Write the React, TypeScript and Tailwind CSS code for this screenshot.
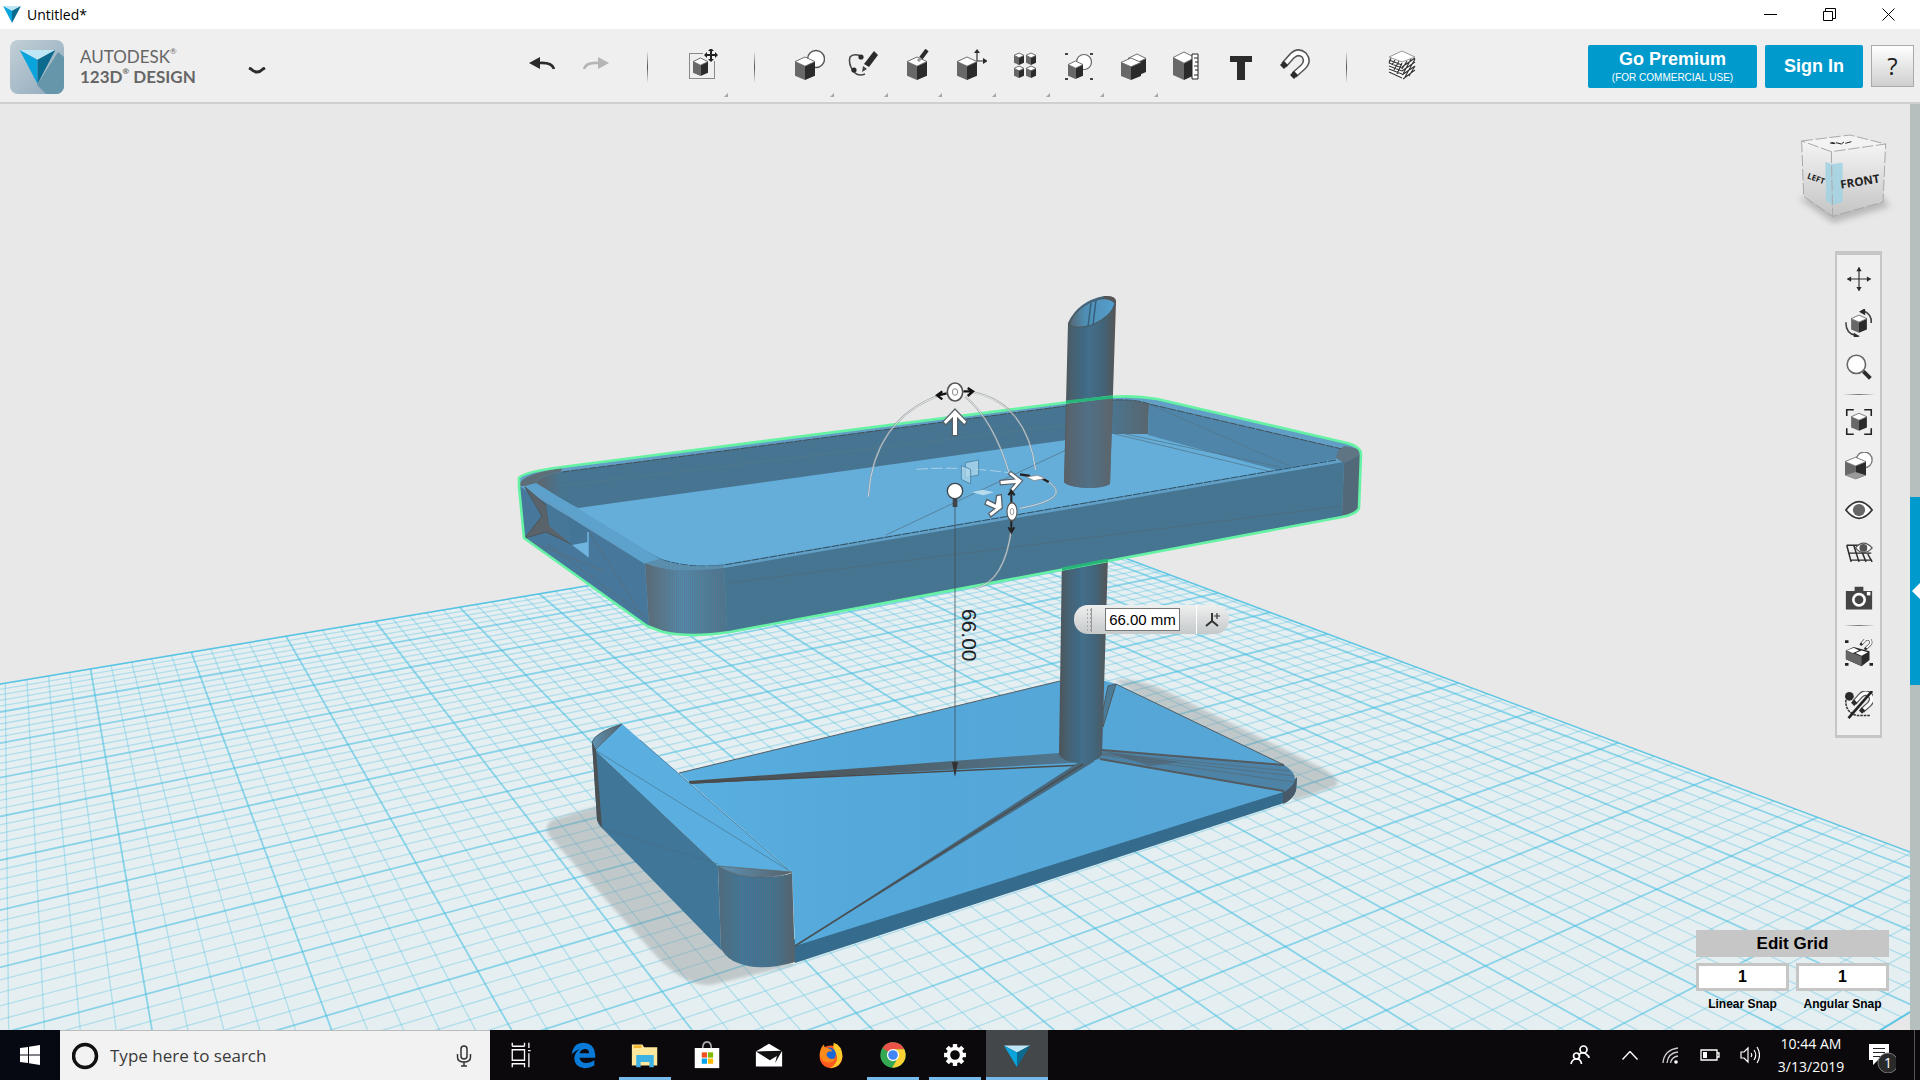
import React from "react";

type Kids = { children: React.ReactNode };

function Cube({ x, y, w, h, glass = false }: { x: number; y: number; w: number; h: number; glass?: boolean }) {
  const m = x + w / 2;
  const a = y + h * 0.2;
  const b = y + h * 0.4;
  const c = y + h * 0.82;
  return (
    <g strokeLinejoin="round">
      <path d={`M${x} ${a}L${m} ${b}V${y + h}L${x} ${c}Z`} fill="#686868" />
      <path d={`M${x + w} ${a}L${m} ${b}V${y + h}L${x + w} ${c}Z`} fill="#2b2b2b" />
      <path d={`M${m} ${y}L${x + w} ${a}L${m} ${b}L${x} ${a}Z`} fill="#fff" stroke="#606060" strokeWidth=".9" />
      {glass && <path d={`M${m} ${c - h * 0.15}L${x + w} ${c}L${m} ${y + h}L${x} ${c}Z`} fill="#999" />}
    </g>
  );
}

function Icon({ children, className = "h-8 w-8" }: Kids & { className?: string }) {
  return (
    <svg viewBox="0 0 32 32" className={className} fill="none" aria-hidden="true">
      {children}
    </svg>
  );
}

function Magnet({ t }: { t?: string }) {
  return (
    <g transform={t}>
      <path d="M5 16 13 7q6-6 12-1 5 6-1 12l-9 8" stroke="#555" strokeWidth="7" />
      <path d="M5 16 13 7q6-6 12-1 5 6-1 12l-9 8" stroke="#fff" strokeWidth="4" />
      <path d="m1 16 4-4 4 4-4 4zM11 26l4-4 4 4-4 4z" fill="#2b2b2b" />
    </g>
  );
}

function Pyramid({ className }: { className: string }) {
  return (
    <svg viewBox="0 0 44 42" className={className} aria-hidden="true">
      <path d="M0 0H44L22 12Z" fill="#bfe6f5" />
      <path d="M0 0 22 12V42Z" fill="#0aa4dc" />
      <path d="M44 0 22 12V42Z" fill="#0b6a8d" />
    </svg>
  );
}

const tools: { name: string; menu: boolean; art: React.ReactNode }[] = [
  {
    name: "Primitives",
    menu: true,
    art: (
      <>
        <circle cx="23" cy="10" r="8.5" fill="#fff" stroke="#555" strokeWidth="1.4" />
        <Cube x={2} y={8} w={20} h={23} />
      </>
    ),
  },
  {
    name: "Sketch",
    menu: true,
    art: (
      <>
        <path d="M14 7Q6 4 3 8q-2 6 3 14 5 6 12 3" stroke="#444" strokeWidth="1.5" />
        <circle cx="14" cy="8" r="2.6" fill="#2b2b2b" />
        <circle cx="7" cy="21" r="2.6" fill="#2b2b2b" />
        <path d="m27 2 4 4-9 12-5-3z" fill="#2b2b2b" />
        <path d="m16 17 4 3-5 3z" fill="#444" />
      </>
    ),
  },
  {
    name: "Construct",
    menu: true,
    art: (
      <>
        <Cube x={6} y={8} w={20} h={23} />
        <path d="m17 12 3-3" stroke="#999" strokeWidth="3" />
        <path d="m20 9 6-8" stroke="#2b2b2b" strokeWidth="4" />
      </>
    ),
  },
  {
    name: "Modify",
    menu: true,
    art: (
      <>
        <Cube x={2} y={8} w={20} h={23} />
        <path d="M22 12V2M22 12H31" stroke="#333" strokeWidth="1.2" />
        <path d="m19 4 3-4 3 4zM28 9l5 3-5 3z" fill="#2b2b2b" />
      </>
    ),
  },
  {
    name: "Pattern",
    menu: true,
    art: (
      <>
        <Cube x={5} y={4} w={10} h={12} />
        <Cube x={17} y={4} w={10} h={12} />
        <Cube x={5} y={17} w={10} h={12} />
        <Cube x={17} y={17} w={10} h={12} />
      </>
    ),
  },
  {
    name: "Grouping",
    menu: true,
    art: (
      <>
        <circle cx="21" cy="13" r="7.5" fill="#fff" stroke="#666" strokeWidth="1.2" />
        <Cube x={5} y={12} w={15} h={18} />
        <path d="M2 5H5M27 5h3M2 30h3M27 30h3" stroke="#444" strokeWidth="2" />
      </>
    ),
  },
  {
    name: "Combine",
    menu: true,
    art: (
      <>
        <Cube x={11} y={5} w={18} h={22} />
        <Cube x={4} y={9} w={20} h={22} />
      </>
    ),
  },
  {
    name: "Measure",
    menu: false,
    art: (
      <>
        <Cube x={2} y={3} w={22} h={28} />
        <path d="M21 5h6v25h-6z" fill="#fff" stroke="#222" />
        <path d="M23 9h4M24 13h3M23 17h4M24 21h3M23 26h4" stroke="#222" />
      </>
    ),
  },
  { name: "Text", menu: false, art: <path d="M5 7h22v6h-7v18h-8V13H5z" fill="#2b2b2b" /> },
  { name: "Snap", menu: false, art: <Magnet /> },
];

function ToolButton({ name, menu, children }: Kids & { name: string; menu?: boolean }) {
  return (
    <button aria-label={name} className="relative flex h-16 w-[54px] shrink-0 items-center justify-center pb-1">
      <Icon>{children}</Icon>
      {menu && (
        <svg viewBox="0 0 4 4" className="absolute right-0.5 bottom-0.5 h-1 w-1">
          <path d="M4 0V4H0Z" fill="#a5a5a5" />
        </svg>
      )}
    </button>
  );
}

function Divider() {
  return <span className="h-8 w-px shrink-0 bg-gradient-to-b from-transparent via-neutral-600 to-transparent" />;
}

function TitleBar() {
  return (
    <div className="flex h-[29px] items-center bg-white pr-0.5 text-black">
      <Pyramid className="ml-0.5 h-[17px] w-5" />
      <span className="ml-[5px] font-['Open_Sans',sans-serif] text-[14px]">Untitled*</span>
      <div className="ml-auto flex">
        <button aria-label="Minimize" className="flex w-[59px] justify-center">
          <svg viewBox="0 0 13 13" className="h-[13px] w-[13px]" stroke="#000" fill="none"><path d="M0 6.500H13" /></svg>
        </button>
        <button aria-label="Restore" className="flex w-[59px] justify-center">
          <svg viewBox="0 0 13 13" className="h-[13px] w-[13px]" stroke="#000" fill="none"><path d="M.5 3.500h9v9h-9zM2.500 3V.5h10v10H10" /></svg>
        </button>
        <button aria-label="Close" className="flex w-[59px] justify-center">
          <svg viewBox="0 0 13 13" className="h-[13px] w-[13px]" stroke="#000" fill="none"><path d="m.5.5 12 12m0-12-12 12" /></svg>
        </button>
      </div>
    </div>
  );
}

function Toolbar() {
  return (
    <div className="flex h-[75px] items-center border-b-2 border-[#cfcfcf] bg-[#efefef] pt-0.5 pr-1.5">
      <div className="flex w-[515px] shrink-0 items-center pl-2.5">
        <div className="relative flex h-[54px] w-[54px] shrink-0 items-center justify-center overflow-hidden rounded-lg bg-gradient-to-br from-[#c3d0d6] to-[#8fa9bd]">
          <svg viewBox="0 0 54 54" className="absolute inset-0" aria-hidden="true">
            <path d="M48 12 54 17V54H36L27 45Z" fill="#6696a9" />
          </svg>
          <Pyramid className="relative h-[34px] w-[43px]" />
        </div>
        <div className="ml-4 w-[120px] font-[Lato,sans-serif] text-[17px] leading-5 whitespace-nowrap text-[#666]">
          <div>AUTODESK<span className="align-top text-[8px] leading-none">®</span></div>
          <div className="font-bold">123D<span className="align-top text-[8px] leading-none">®</span> DESIGN</div>
        </div>
        <button aria-label="Application menu" className="mt-2 ml-12">
          <svg viewBox="0 0 18 8" className="h-2 w-[18px]" fill="none" stroke="#2b2b2b" strokeWidth="3"><path d="m1 1 2 1q6 6 12 0l2-1" /></svg>
        </button>
      </div>
      <button aria-label="Undo" className="flex w-[54px] shrink-0 justify-center pb-1.5">
        <svg viewBox="0 0 26 13" className="h-[13px] w-[26px]" fill="none"><path d="M0 6 11 0V12Z" fill="#2b2b2b" /><path d="M10 6q13-1 15 6" stroke="#2b2b2b" strokeWidth="2.600" /></svg>
      </button>
      <button aria-label="Redo" className="flex w-[54px] shrink-0 justify-center pb-1.5">
        <svg viewBox="0 0 26 13" className="h-[13px] w-[26px]" fill="none"><path d="M26 6 15 0V12Z" fill="#b5b5b5" /><path d="M16 6Q3 5 1 12" stroke="#b5b5b5" strokeWidth="2.600" /></svg>
      </button>
      <div className="flex items-center pl-6">
        <Divider />
        <div className="pr-6 pl-7">
          <ToolButton name="Transform" menu>
            <path d="M2.500 4.500h25v25h-25z" stroke="#222" strokeDasharray="1 1" />
            <path d="M16 0h16v12H16z" fill="#efefef" />
            <Cube x={6} y={9} w={15} h={18} />
            <path d="M24 1v10M19 6h10" stroke="#222" strokeWidth="2" />
            <path d="m21 2 3-3 3 3zM21 10l3 3 3-3zM20 3l-3 3 3 3zM28 3l3 3-3 3z" fill="#222" />
          </ToolButton>
        </div>
        <Divider />
      </div>
      <div className="flex items-center pr-6 pl-[27px]">
        {tools.map((t) => (
          <ToolButton key={t.name} name={t.name} menu={t.menu}>{t.art}</ToolButton>
        ))}
      </div>
      <Divider />
      <div className="pl-7">
        <ToolButton name="Material">
          <path d="M3 8 16 13V30L3 24ZM29 8 16 13V30L29 24Z" fill="#fff" />
          <path d="M3 11l13 5M3 14l13 5M3 17l13 5M3 20l13 5M3 23l13 6M29 9 16 18M29 13 16 22M29 17 16 26M29 21l-12 9M5 9l-2 5M9 11l-3 5M13 12l-5 9M16 14 11 25M21 12l-5 8M25 10l-8 15M29 10 19 28M29 17l-6 10" stroke="#333" strokeWidth="1.100" />
          <path d="M16 2 29 8 16 13 3 8Z" fill="#fff" stroke="#999" />
        </ToolButton>
      </div>
      <div className="ml-auto flex shrink-0 gap-2 font-['Liberation_Sans',Arial,sans-serif] text-white">
        <button className="h-[43px] w-[169px] rounded-xs bg-[#009acd]">
          <span className="block text-[18px] leading-[22px] font-bold">Go Premium</span>
          <span className="block text-[10px] leading-4">(FOR COMMERCIAL USE)</span>
        </button>
        <button className="h-[43px] w-[98px] rounded-xs bg-[#009acd] text-[18px] font-bold">Sign In</button>
        <button className="h-[42px] w-[43px] border border-[#aaa] bg-gradient-to-b from-white to-[#cfcfcf] font-['Open_Sans',sans-serif] text-[24px] text-[#222]">?</button>
      </div>
    </div>
  );
}

/* Ground plane: every line of a family runs to its own vanishing point. */
const vpA = { x: 3380, y: 118 };
const vpB = { x: 0, y: 137 };

const alongRight = Array.from({ length: 76 }, (_, i) => {
  const x = 1 / (0.0009903 - (i * 0.00003386) / 5);
  const y = 137 + 0.3742 * x;
  const k = 3;
  return { major: i % 5 === 0, x1: x, y1: y, x2: x + (x - vpA.x) * k, y2: y + (y - vpA.y) * k };
});

const alongBack = Array.from({ length: 110 }, (_, i) => {
  const x = vpA.x - 1 / (0.0004192 - (i - 1) * 0.00000192);
  const y = 684 - 0.1675 * x;
  const k = 6;
  return { major: i % 5 === 1, x1: x, y1: y, x2: x + (x - vpB.x) * k, y2: y + (y - vpB.y) * k };
});

function Ground() {
  return (
    <g>
      <clipPath id="plane"><path d="M1010 515 2073 913 1740 1116H-400V751Z" /></clipPath>
      <path d="M1010 515 2073 913 1740 1116H-400V751Z" fill="#e5eef0" />
      <g clipPath="url(#plane)" stroke="#3fbde2">
        {[...alongRight, ...alongBack].map((l, i) => (
          <line key={i} x1={l.x1} y1={l.y1} x2={l.x2} y2={l.y2} strokeWidth={l.major ? 1.8 : 1.3} opacity={l.major ? 0.55 : 0.32} />
        ))}
      </g>
      <path d="M-400 751 1010 515 2073 913 1740 1116" fill="none" stroke="#3fbde2" strokeWidth="1.500" opacity=".8" />
    </g>
  );
}

function Defs() {
  return (
    <defs>
      <linearGradient id="pole">
        <stop offset="0" stopColor="#4d5356" /><stop offset=".15" stopColor="#48606f" /><stop offset=".42" stopColor="#3f6a86" />
        <stop offset=".46" stopColor="#446f8b" /><stop offset=".75" stopColor="#426479" /><stop offset="1" stopColor="#555" />
      </linearGradient>
      <linearGradient id="poleIn">
        <stop offset="0" stopColor="#5e656b" /><stop offset=".5" stopColor="#567085" /><stop offset="1" stopColor="#62686c" />
      </linearGradient>
      <linearGradient id="plate"><stop offset="0" stopColor="#5aafe1" /><stop offset=".3" stopColor="#54a8da" /><stop offset="1" stopColor="#56a6d6" /></linearGradient>
      <linearGradient id="beam"><stop offset="0" stopColor="#4a4a4a" /><stop offset=".5" stopColor="#4f5f69" /><stop offset="1" stopColor="#507a94" /></linearGradient>
      <linearGradient id="corner"><stop offset="0" stopColor="#4c6c80" /><stop offset=".3" stopColor="#40779b" /><stop offset=".75" stopColor="#41718f" /><stop offset="1" stopColor="#53626b" /></linearGradient>
      <linearGradient id="trayCorner"><stop offset="0" stopColor="#586b78" /><stop offset=".45" stopColor="#5189ac" /><stop offset="1" stopColor="#4a7590" /></linearGradient>
      <linearGradient id="cap"><stop offset="0" stopColor="#5d93b5" /><stop offset="1" stopColor="#57626a" /></linearGradient>
      <linearGradient id="darkEnd"><stop offset="0" stopColor="#4a7692" /><stop offset="1" stopColor="#59656d" /></linearGradient>
      <linearGradient id="innerEnd"><stop offset="0" stopColor="#5f666b" /><stop offset="1" stopColor="#477591" /></linearGradient>
      <linearGradient id="bore"><stop offset="0" stopColor="#55666f" /><stop offset=".35" stopColor="#4f8eb4" /><stop offset="1" stopColor="#559fcd" /></linearGradient>
      <pattern id="ribs" width="2" height="8" patternUnits="userSpaceOnUse"><path d="M.5 0V8" stroke="#6b6560" strokeWidth=".7" opacity=".32" /></pattern>
      <filter id="soft"><feGaussianBlur stdDeviation="1.500" /></filter>
    </defs>
  );
}

function Base() {
  return (
    <g>
      <g fill="#8b9294" opacity=".4" filter="url(#soft)">
        <path d="M597 806 552 820Q542 828 551 838L658 958Q690 990 715 984L795 965Z" />
        <path d="M1115 680Q1140 678 1168 692L1322 768Q1345 782 1334 787L1296 800Z" />
      </g>
      <path d="M792 940 1283 792 1297 778 1296 791Q1293 800 1281 804L795 963Z" fill="#356b8c" />
      <path d="M1283 792 1297 777 1296 790Q1293 800 1283 804Z" fill="#48596a" />
      <path d="M679 773 1060 681H1105L1116 684 1284 765Q1305 779 1283 792L795 946 792 872Z" fill="url(#plate)" />
      <path d="M679 773 1060 681M1116 684 1284 765" stroke="#505d64" fill="none" />
      <path d="M689 781 1059 753 1089 762 689 784Z" fill="url(#beam)" />
      <path d="m689 783 395-18" stroke="#4b4b4b" strokeWidth="1.500" />
      <path d="M795 946 1079 762 1095 761Z" fill="#49687c" />
      <path d="M795 946 1083 764" stroke="#4a4f52" strokeWidth="1.500" />
      <path d="M1102 750 1284 765Q1306 779 1284 792L1098 759Z" fill="#4d83a7" />
      <path d="M1102 750 1284 765M1100 759 1284 791" stroke="#535b60" strokeWidth="2" />
      <path d="M1102 753 1290 771M1102 754 1294 776M1102 755 1294 782" stroke="#5a6468" strokeWidth=".6" />
      <path d="M1102 751 1180 762 1150 766Z" fill="#505961" opacity=".5" />
      <path d="M1116 684 1103 727V710L1108 686Z" fill="#4c7b97" stroke="#515a60" />
      <path d="M1062 555h46L1102 755Q1096 763 1080 763 1062 762 1059 754Z" fill="url(#pole)" />
      <path d="M592 742Q594 733 622 724L792 872 718 866 595 750Z" fill="#5aafe0" />
      <path d="M592 742Q596 732 622 724L595 750Z" fill="url(#cap)" stroke="#505b61" strokeWidth=".8" />
      <path d="M592 742 595 750 718 866 721 950 602 828Q597 824 597 818Z" fill="#407799" />
      <path d="m592 742 5 78 5 8-6-78z" fill="#4b5052" />
      <path d="M595 750 788 870M640 740 790 871M602 828 718 864" stroke="#486a7e" strokeWidth=".8" opacity=".7" />
      <path d="M718 866Q738 878 760 877 782 877 792 873L795 962Q760 972 738 963 728 960 721 949Z" fill="url(#corner)" />
      <path d="M718 866Q738 878 760 877 782 877 792 873L795 962Q760 972 738 963 728 960 721 949Z" fill="url(#ribs)" />
      <path d="M718 866 792 872Q780 877 760 877 738 878 718 866Z" fill="url(#cap)" stroke="#56636a" strokeWidth=".8" />
    </g>
  );
}

function Tray() {
  return (
    <g>
      <path d="M519 487V478Q523 472 562 467L1109 397Q1135 395 1157 399L1347 443Q1361 447 1361 454L1359 508Q1357 514 1342 517L730 632Q690 638 663 632L647 626 524 538Z" fill="#619fc6" />
      <path d="M536 483Q540 475 562 472L1112 400Q1136 399 1149 404L1342 449 1336 460 724 564Q690 569 660 559Z" fill="#66aeda" />
      <path d="M536 483Q540 475 562 472L1112 400 1110 434 578 508 548 492Z" fill="#477591" />
      <path d="M536 483Q540 475 562 472V500L546 490Z" fill="url(#innerEnd)" />
      <path d="M1112 400Q1130 399 1149 404L1148 434 1110 434Z" fill="url(#darkEnd)" />
      <path d="M1149 404 1342 449 1336 459 1276 470 1148 435Z" fill="#4f85a9" />
      <path d="M1149 404 1290 466M560 486 1108 420M886 535 1066 450M1115 434 1268 471M1125 434 1280 467" stroke="#53778b" strokeWidth=".8" />
      <path d="M562 472 1112 400Q1136 399 1149 404L1342 449" fill="none" stroke="#444f56" strokeDasharray="8 1" />
      <path d="M1336 460 724 565Q690 569 660 559L630 543" fill="none" stroke="#2e4f63" strokeDasharray="8 1" />
      <path d="M724 568 1344 462 1342 516 727 632Z" fill="#467591" />
      <path d="M728 583 1342 506" stroke="#50697a" strokeWidth=".8" />
      <path d="M1336 458 1338 451 1344 446Q1361 448 1361 454L1344 463Z" fill="#5f7583" />
      <path d="M1344 463 1361 454 1359 508Q1356 514 1342 516Z" fill="#52697a" />
      <path d="M519 486 645 564 649 626 524 537Z" fill="#47779a" />
      <path d="M525 485 536 483 660 559 645 564Z" fill="#5ca2cd" />
      <path d="M519 486Q520 474 562 468L561 472Q539 475 536 483L525 486Z" fill="#5e6e78" />
      <path d="M525 487 546 505 549 525 573 545 546 532 525 538 542 516Z" fill="#5b636a" stroke="#4b555a" strokeWidth="1" />
      <path d="M546 505 568 516 572 545 549 526Z" fill="#467799" />
      <path d="M568 516 589 530V557L572 545Z" fill="#437596" />
      <path d="M572 545 588 542V557Z" fill="#6fb5e0" />
      <path d="M588 532V557" stroke="#6fb5e0" strokeWidth="1.500" />
      <path d="M589 532 640 612M526 540 604 571M546 543 646 618" stroke="#5b6c76" strokeWidth=".7" />
      <path d="M645 563Q665 571 690 570L724 567 727 632Q690 638 663 632L649 625Z" fill="url(#trayCorner)" />
      <path d="M645 563Q665 571 690 570L724 567 727 632Q690 638 663 632L649 625Z" fill="url(#ribs)" />
      <path d="M645 563 660 559Q685 569 724 565V568Q670 574 645 563Z" fill="#5b8ead" />
      <path d="M1068 323Q1078 301 1104 296 1116 295 1116 302L1110 484Q1104 488 1088 488 1068 487 1064 482Z" fill="url(#pole)" />
      <path d="M1067 400 1113 396 1110 484Q1104 488 1088 488 1068 487 1064 482Z" fill="url(#poleIn)" opacity=".75" />
      <path d="M1069 324Q1078 304 1100 299 1114 297 1115 303 1112 316 1092 325 1073 330 1069 324Z" fill="url(#bore)" stroke="#4c565c" />
      <path d="M1091 303 1088 327M1096 300 1093 325" stroke="#36607a" strokeWidth="1.500" />
      <path d="M1104 296Q1116 295 1116 302V306Q1114 300 1104 299Z" fill="#555" />
      <path d="M519 487V478Q523 472 562 467L1109 397Q1135 395 1157 399L1347 443Q1361 447 1361 454L1359 508Q1357 514 1342 517L730 632Q690 638 663 632L647 626 524 538Z" fill="none" stroke="#66f2a4" strokeWidth="2.600" strokeLinejoin="round" />
      <path d="M1066 402 1113 397M1062 569 1108 560" stroke="#27b57a" strokeWidth="3" />
    </g>
  );
}

function Dial() {
  return (
    <>
      <ellipse rx="23" ry="27" fill="#fff" stroke="#555" strokeWidth="5" />
      <ellipse rx="8" ry="10" fill="#fff" stroke="#888" strokeWidth="3" />
    </>
  );
}

function Arc({ d }: { d: string }) {
  return (
    <>
      <path d={d} stroke="#8d9396" strokeWidth="6" fill="none" />
      <path d={d} stroke="#e9edef" strokeWidth="3" fill="none" />
    </>
  );
}

/* Handles are drawn on a grid three times finer than the canvas. */
function Gizmo() {
  const arrow = "M-8 40V-12L-28 8-36-2 0-40 36-2 28 8 8-12V40Z";
  return (
    <g>
      <path d="M955 498V775" stroke="#3e4a52" strokeOpacity=".75" />
      <path d="m952 762 3 15 3-15z" fill="#333" />
      <g transform="translate(840 360) scale(.33333)">
        <g opacity=".7">
          <Arc d="M85 410Q100 180 300 105" />
          <Arc d="M400 97Q560 130 587 330" />
          <Arc d="M376 110Q460 180 508 340" />
          <Arc d="M515 500Q495 670 400 686" />
          <Arc d="M625 365Q700 415 540 445" />
        </g>
        <path d="M230 328Q360 318 505 338" stroke="#a9cfe4" strokeWidth="3" strokeDasharray="34 10" fill="none" />
        <path d="M376 308 416 300V345L376 353Z" fill="#b4d9ea" fillOpacity=".7" stroke="#4d8caf" strokeWidth="3" />
        <path d="M364 316 392 328V372L364 358Z" fill="#b4d9ea" fillOpacity=".7" stroke="#4d8caf" strokeWidth="3" />
        <path d="m396 397 32-8 34 8-32 9z" fill="#b8dcee" />
        <g transform="translate(345 96)">
          <path d="M-50 10-25 4M25-2 50-2M-38-2-54 10-38 22M38-12 54-2 38 12" stroke="#111" strokeWidth="7" fill="none" />
          <Dial />
        </g>
        <g fill="#fff" stroke="#56616a" strokeWidth="4">
          <path d={arrow} transform="translate(345 187)" />
          <path d={arrow} transform="translate(514 365) rotate(85) scale(.85)" />
          <path d="M440 418 466 431 470 407 484 404 487 444 452 471 446 460 464 446 435 433Z" />
        </g>
        <path d="M514 395V515M505 406 514 392 524 406M505 502 514 517 523 502" stroke="#222" strokeWidth="6" fill="none" />
        <g transform="translate(516 455) scale(.65 1)"><Dial /></g>
        <path d="m540 343 30 5m38 8 18 10" stroke="#222" strokeWidth="7" />
        <path d="m560 351 32-5 24 9-34 7z" fill="#fff" stroke="#777" strokeWidth="2" />
        <path d="M338 415h14v26h-14z" fill="#3d454a" />
        <circle cx="345" cy="393" r="23" fill="#fff" stroke="#3d454a" strokeWidth="4" />
      </g>
      <text transform="translate(962 609) rotate(90)" fontSize="21" fill="#1d2226" fontFamily="'Liberation Sans', Arial, sans-serif">66.00</text>
    </g>
  );
}

function ViewCube() {
  return (
    <svg viewBox="690 400 321 291" className="absolute top-[29px] right-[13px] h-[97px] w-[107px]" role="img" aria-label="View cube">
      <defs>
        <linearGradient id="side" x2="0" y2="1"><stop offset="0" stopColor="#f4f4f4" /><stop offset="1" stopColor="#c4c4c4" /></linearGradient>
        <filter id="haze"><feGaussianBlur stdDeviation="10" /></filter>
      </defs>
      <path d="M715 595 820 670 990 620 960 585Z" fill="#999" opacity=".6" filter="url(#haze)" />
      <path d="M725 424 814 456 818 650 731 590Z" fill="url(#side)" />
      <path d="M977 433 814 456 818 650 969 607Z" fill="url(#side)" />
      <path d="M725 424 870 406 977 433 814 456Z" fill="#f3f3f3" />
      <path d="M796 487 815 493 848 489V607L818 616 798 604Z" fill="#a4d3e2" opacity=".9" />
      <path d="M725 424 870 406 977 433 814 456ZM814 456 818 650M725 424 731 590 818 650 969 607 977 433" fill="none" stroke="#a9a9a9" strokeWidth="3" strokeDasharray="34 8" />
      <path d="m810 430 14 2m4-3 16 4 8-6m4 4 18-5m-60 2 12 3" stroke="#222" strokeWidth="3" fill="none" />
      <g fontFamily="'Open Sans', sans-serif" fontWeight="700" fill="#222">
        <text transform="translate(740 536) rotate(19)" fontSize="24">LEFT</text>
        <text transform="translate(843 567) rotate(-9)" fontSize="35">FRONT</text>
      </g>
    </svg>
  );
}

function NavButton({ name, children }: Kids & { name: string }) {
  return (
    <button aria-label={name} className="flex h-11 w-full items-center justify-center">
      <Icon className="h-7 w-7">{children}</Icon>
    </button>
  );
}

function NavRule() {
  return <span className="my-[5px] h-px w-8 bg-gradient-to-r from-transparent via-neutral-500 to-transparent" />;
}

function NavBar() {
  return (
    <nav className="absolute top-[147px] right-7 flex w-[47px] flex-col items-center border-x-2 border-t-4 border-b-[3px] border-[#c6c6c6] bg-[#efefef] pt-0.5 pb-2">
      <NavButton name="Pan">
        <path d="M16 3V29M3 16H29" stroke="#2b2b2b" strokeWidth="1.300" />
        <path d="m13 7 3-5 3 5zM13 25l3 5 3-5zM7 13l-5 3 5 3zM25 13l5 3-5 3z" fill="#2b2b2b" />
      </NavButton>
      <NavButton name="Orbit">
        <Cube x={7} y={7} w={18} h={20} />
        <path d="M21 2q10 4 9 14M1 15q0 13 11 15" stroke="#444" strokeWidth="1.800" />
        <path d="m16 3 7-4v8zM17 31l-7-4v7z" fill="#2b2b2b" />
      </NavButton>
      <NavButton name="Zoom">
        <path d="m21 21 8 8" stroke="#2b2b2b" strokeWidth="4.500" />
        <circle cx="13" cy="13" r="10.500" fill="#fff" stroke="#666" strokeWidth="1.800" />
      </NavButton>
      <NavRule />
      <NavButton name="Fit">
        <path d="M2 9V2h8M22 2h8v7M30 23v7h-8M10 30H2v-7" stroke="#222" strokeWidth="1.800" />
        <Cube x={7} y={6} w={18} h={20} />
      </NavButton>
      <NavButton name="Shading">
        <circle cx="22" cy="9" r="9" fill="#fff" stroke="#777" strokeWidth="1.500" />
        <Cube x={0} y={6} w={24} h={25} glass />
      </NavButton>
      <NavButton name="Visibility">
        <path d="M1 16Q16-3 31 16 16 35 1 16Z" fill="#fff" stroke="#333" strokeWidth="2" />
        <circle cx="16" cy="16" r="7" fill="#666" />
      </NavButton>
      <NavButton name="Grid visibility">
        <path d="M2 6H26M4 15H30M6 23H31M2 6l5 19M10 6l6 19M18 10l6 15M26 16l5 9" stroke="#2b2b2b" strokeWidth="1.700" />
        <path d="M12 9Q21-2 31 9 21 20 12 9Z" fill="#fff" stroke="#555" strokeWidth="1.500" />
        <circle cx="21" cy="9" r="4.500" fill="#555" />
      </NavButton>
      <NavButton name="Screenshot">
        <path d="M1 8h10V3h10v5h10v21H1z" fill="#444" />
        <circle cx="16" cy="18" r="6.500" stroke="#fff" strokeWidth="3" />
        <path d="M25 9h4v4h-4z" fill="#fff" />
      </NavButton>
      <NavRule />
      <NavButton name="Group snap">
        <path d="M1 13 10 9l18 5v10l-9 7-18-8z" fill="#2b2b2b" />
        <path d="m1 13 18 7v11L1 23z" fill="#666" />
        <path d="m2 13 8-3 6 3-7 3zM12 16l7-3 7 2-7 4z" fill="#fff" />
        <Magnet t="translate(16 -2) scale(.5)" />
        <path d="M0 3h4M0 29h4M28 29h4" stroke="#222" strokeWidth="3" />
      </NavButton>
      <div className="mt-2 w-full">
        <NavButton name="Snap off">
          <circle cx="5" cy="6" r="5" fill="#2b2b2b" />
          <path d="M1 10q-1 14 12 18h16" stroke="#333" strokeWidth="1.800" strokeDasharray="3 1" />
          <Magnet t="translate(6 -1) scale(.9)" />
          <path d="M4 31 31 0" stroke="#222" strokeWidth="3" />
        </NavButton>
      </div>
    </nav>
  );
}

function GridPanel() {
  return (
    <div className="absolute right-[21px] bottom-[18px] w-[193px] font-['Liberation_Sans',Arial,sans-serif] font-bold text-black">
      <button className="block h-[27px] w-full bg-[#c6c6c6] text-[17px]">Edit Grid</button>
      <div className="mt-1.5 grid grid-cols-2 gap-[7px]">
        {["Linear Snap", "Angular Snap"].map((n) => (
          <label key={n} className="flex flex-col text-center text-[12px] leading-4">
            <input defaultValue="1" className="mb-[5px] h-7 w-full border-[3px] border-[#c6c6c6] bg-white text-center text-[16px]" />
            <span className="whitespace-nowrap">{n}</span>
          </label>
        ))}
      </div>
    </div>
  );
}

function DistanceBox() {
  return (
    <div className="absolute top-[501px] left-[1074px] flex h-[29px] w-[155px] items-center rounded-[14px] bg-gradient-to-b from-[#efefef] to-[#c5c9ca]">
      <span className="ml-3 h-6 w-1.5 border-r border-[#999] bg-[radial-gradient(#aaa_1px,transparent_1px)] bg-[length:3px_4px]" />
      <input aria-label="Distance" defaultValue="66.00 mm" className="ml-[13px] h-[23px] w-[75px] border border-[#777] bg-white text-center font-['Liberation_Sans',Arial,sans-serif] text-[15px] text-black" />
      <button aria-label="Axis options" className="ml-4 flex h-full flex-1 items-center border-l border-white pl-2">
        <svg viewBox="0 0 16 16" className="h-4 w-4" fill="none" stroke="#333" strokeWidth="2"><path d="M7 1v8l-6 5M7 9l6 5" /><path d="M12 1v6M9 4h6" strokeWidth="1.200" /></svg>
      </button>
    </div>
  );
}

function Viewport() {
  return (
    <main className="relative flex flex-1 overflow-hidden bg-[#e8e8e8]">
      <div className="relative flex-1 overflow-hidden">
        <svg viewBox="0 104 1910 926" preserveAspectRatio="xMinYMin slice" className="absolute inset-0 h-full w-full" role="img" aria-label="Phone stand model">
          <Defs />
          <Ground />
          <Base />
          <Tray />
          <Gizmo />
        </svg>
        <ViewCube />
        <NavBar />
        <GridPanel />
        <DistanceBox />
      </div>
      <aside className="w-2.5 bg-[#b5c0be] pt-[393px]">
        <button aria-label="Open panel" className="flex h-[188px] w-full items-center justify-end bg-[#009acd]">
          <svg viewBox="0 0 8 16" className="h-4 w-2"><path d="M8 0V16L0 8Z" fill="#fff" /></svg>
        </button>
      </aside>
    </main>
  );
}

function TaskButton({ name, children, open, active }: Kids & { name: string; open?: boolean; active?: boolean }) {
  return (
    <button aria-label={name} className={`relative flex h-full w-[62px] items-center justify-center ${active ? "bg-[#44474a]" : ""}`}>
      <Icon className="h-7 w-7">{children}</Icon>
      {open && <span className={`absolute bottom-0 h-[3px] bg-[#76b9ed] ${active ? "inset-x-0" : "inset-x-[5px]"}`} />}
    </button>
  );
}

function TrayIcon({ name, children }: Kids & { name: string }) {
  return (
    <button aria-label={name} className="flex h-full w-10 items-center justify-center">
      <svg viewBox="0 0 20 20" className="h-5 w-5" fill="none" stroke="#fff" strokeWidth="1.500">{children}</svg>
    </button>
  );
}

const teeth = [0, 45, 90, 135, 180, 225, 270, 315];

function TaskBar() {
  return (
    <footer className="flex h-[50px] items-center bg-[#0b090b] font-['Open_Sans',sans-serif] text-white">
      <button aria-label="Start" className="flex h-full w-[60px] shrink-0 items-center justify-center bg-[#060812]">
        <svg viewBox="0 0 20 20" className="h-5 w-5" fill="#fff"><path d="M0 3 8 2v7.500H0zM9 1.800 20 0v9.500H9zM0 10.500h8V18l-8-1zM9 10.500h11V20L9 18.200z" /></svg>
      </button>
      <label className="flex h-full w-[430px] items-center border-t border-[#bbb] bg-[#f2f2f2] pl-3">
        <svg viewBox="0 0 28 28" className="h-7 w-7 shrink-0" fill="none"><circle cx="13" cy="14" r="11.500" stroke="#111" strokeWidth="3.500" /></svg>
        <input aria-label="Search" placeholder="Type here to search" className="ml-2.5 min-w-0 flex-1 bg-transparent text-[17px] text-black placeholder:text-[#3a3a3a]" />
        <svg viewBox="0 0 16 22" className="mr-[18px] h-[22px] w-4" fill="none" stroke="#333" strokeWidth="1.500"><rect x="5" y="1" width="6" height="13" rx="3" /><path d="M1.500 9v3q0 5 6.500 5t6.500-5V9M8 17v4M5 21h6" /></svg>
      </label>
      <TaskButton name="Task view">
        <path d="M6 6V2M20 6V2M6 6h14M6 10h14v12H6zM6 30v-4h14v4M25 2v6M25 14v16M24 11h3" stroke="#fff" strokeWidth="1.500" />
      </TaskButton>
      <TaskButton name="Edge">
        <path d="M3 15Q5 2 17 2q12 1 13 13v4H12q1 6 8 6 5 0 9-3v6q-5 3-11 3Q6 30 6 19q1-7 7-10-5 1-10 6zM12 14h11q0-5-5-5-5 1-6 5Z" fill="#0a7ad8" fillRule="evenodd" />
      </TaskButton>
      <TaskButton name="File Explorer" open>
        <path d="M1 4h12l2 3h15v21H1z" fill="#ffe79c" /><path d="M3 5h9v3H3z" fill="#f3b52f" /><path d="M6 16h20v14h-5v-6H11v6H6z" fill="#3fb2e5" />
      </TaskButton>
      <TaskButton name="Store">
        <path d="M11 9q0-8 5-8t5 8" stroke="#aaa" strokeWidth="2" /><path d="M2 8h28v23H2z" fill="#fff" />
        <path d="M10 13h6v6h-6z" fill="#f25022" /><path d="M17 13h6v6h-6z" fill="#7fba00" /><path d="M10 20h6v6h-6z" fill="#00a4ef" /><path d="M17 20h6v6h-6z" fill="#ffb900" />
      </TaskButton>
      <TaskButton name="Mail">
        <path d="M1 12 16 3l15 9v17H1z" fill="#fff" /><path d="m1 12 30-1-8 14 2-8-8 5z" fill="#111" />
      </TaskButton>
      <TaskButton name="Firefox">
        <circle cx="16" cy="18" r="13" fill="#ff5a1f" /><path d="M19 2q10 3 10 16-1 12-14 13 12-8 6-18-3-4-2-11z" fill="#ffca2c" />
        <circle cx="14" cy="15" r="7.500" fill="#1668d8" /><path d="M3 15Q4 7 8 4q0 4 4 4 4 1 6 4-7-1-7 4 2 6 10 4-4 6-11 4-6-2-7-9z" fill="#ff8a1c" />
      </TaskButton>
      <TaskButton name="Chrome" open>
        <circle cx="16" cy="16" r="14.500" fill="#34a853" /><path d="M16 16 4 8Q8 1.500 16 1.500 25 1.500 29 9.500H16Z" fill="#ea5347" /><path d="M29 9.500H16l6 9-7 12Q27 30 30 20 31 14 29 9.500Z" fill="#fdd033" />
        <circle cx="16" cy="16" r="7" fill="#fff" /><circle cx="16" cy="16" r="5.500" fill="#4285f4" />
      </TaskButton>
      <TaskButton name="Settings" open>
        <circle cx="16" cy="16" r="7.500" stroke="#fff" strokeWidth="4" />
        {teeth.map((a) => <path key={a} d="M13.500 3.500h5v5h-5z" fill="#fff" transform={`rotate(${a} 16 16)`} />)}
      </TaskButton>
      <TaskButton name="123D Design" open active>
        <path d="M1 5H31L16 13Z" fill="#bfe6f5" /><path d="M1 5 16 13V30Z" fill="#0aa4dc" /><path d="M31 5 16 13V30Z" fill="#0b6a8d" />
      </TaskButton>
      <div className="ml-auto flex h-full items-center">
        <button aria-label="People" className="flex h-full w-[60px] items-center justify-center">
          <svg viewBox="0 0 20 20" className="h-5 w-5" fill="none" stroke="#fff" strokeWidth="1.700"><circle cx="13.500" cy="4.500" r="3.500" /><circle cx="6.500" cy="11" r="3" /><path d="M8 10q5-4 8-1 3 2 3 4M1 19q1-5 5.500-5t5 5" /></svg>
        </button>
        <button aria-label="Show hidden icons" className="flex h-full w-10 items-center justify-center">
          <svg viewBox="0 0 16 9" className="h-[9px] w-4" fill="none" stroke="#fff" strokeWidth="1.400"><path d="m.5 8.500 7.500-8 7.500 8" /></svg>
        </button>
        <div className="flex h-full pr-1">
          <TrayIcon name="Network">
            <path d="M3 18Q4 5 18 3M7 18Q8 8 18 7M10.500 18q1-6 7.500-7" stroke="#ccc" strokeWidth="1.300" /><circle cx="16" cy="17" r="1.800" fill="#fff" stroke="none" />
          </TrayIcon>
          <TrayIcon name="Battery"><path d="M1 5h16v10H1zM17 8h2v4h-2" strokeWidth="1.300" /><path d="M3 7h4v6H3z" fill="#fff" stroke="none" /></TrayIcon>
          <TrayIcon name="Volume"><path d="M1 7h3l4-4v14l-4-4H1zM11 8q1.500 2 0 4M14 5q3.500 5 0 10M17 2q5 8 0 16" strokeWidth="1.200" /></TrayIcon>
        </div>
        <div className="w-[74px] text-center text-[14px] leading-[23px] whitespace-nowrap">
          <div>10:44 AM</div>
          <div>3/13/2019</div>
        </div>
        <button aria-label="Notifications" className="relative flex h-full w-[60px] items-center justify-center pl-1">
          <svg viewBox="0 0 32 32" className="mt-1 h-8 w-8" fill="none">
            <path d="M5 3h20v16H14l-5 5v-5H5z" fill="#fff" /><path d="M9 7.500h12M9 11.500h12M9 15.500h8" stroke="#222" />
            <circle cx="24" cy="22" r="10" fill="#2a2a2a" stroke="#777" />
            <text x="24" y="27" textAnchor="middle" fontSize="14" fill="#fff" fontFamily="'Open Sans', sans-serif">1</text>
          </svg>
        </button>
        <span className="mr-[5px] ml-1.5 h-full w-px bg-[#555]" />
      </div>
    </footer>
  );
}

export default function App() {
  return (
    <div className="flex min-h-screen flex-col bg-[#e8e8e8]">
      <TitleBar />
      <Toolbar />
      <Viewport />
      <TaskBar />
    </div>
  );
}
